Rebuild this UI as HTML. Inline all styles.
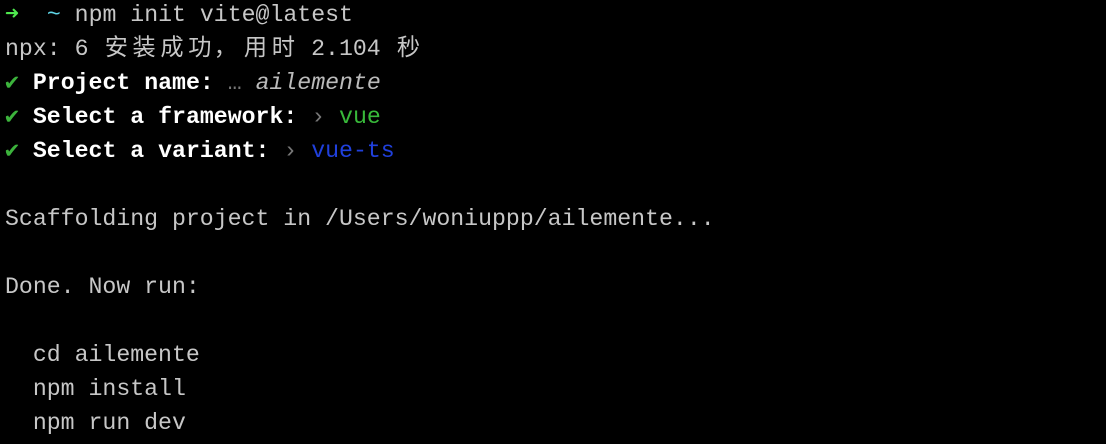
<!DOCTYPE html>
<html><head><meta charset="utf-8"><style>
html,body{margin:0;padding:0;background:#000;width:1106px;height:444px;overflow:hidden}
pre{margin:0;padding:0 0 0 5px;font-family:"Liberation Mono","Noto Sans CJK SC",monospace;font-size:23.2px;line-height:34px;color:#c7c7c7;position:relative;top:-2px;white-space:pre}
b{color:#fff;font-weight:bold}
.ga{color:#4ee84e;font-weight:bold}.cy{color:#5fd7e8}.ck{color:#3cb33c}.vg{color:#38b93a}.bl{color:#2040dc}.dim{color:#777}
i{font-style:italic;color:#bbb}
.w{display:inline-block;width:27.84px;text-align:center}
</style></head><body><pre><span class="ga">➜</span>  <span class="cy">~</span> npm init vite@latest
npx: 6 <span class="w">安</span><span class="w">装</span><span class="w">成</span><span class="w">功</span><span class="w" style="text-align:left">，</span><span class="w">用</span><span class="w">时</span> 2.104 <span class="w">秒</span>
<span class="ck">✔</span> <b>Project name:</b> <span class="dim">…</span> <i>ailemente</i>
<span class="ck">✔</span> <b>Select a framework:</b> <span class="dim">›</span> <span class="vg">vue</span>
<span class="ck">✔</span> <b>Select a variant:</b> <span class="dim">›</span> <span class="bl">vue-ts</span>

Scaffolding project in /Users/woniuppp/ailemente...

Done. Now run:

  cd ailemente
  npm install
  npm run dev
</pre></body></html>
